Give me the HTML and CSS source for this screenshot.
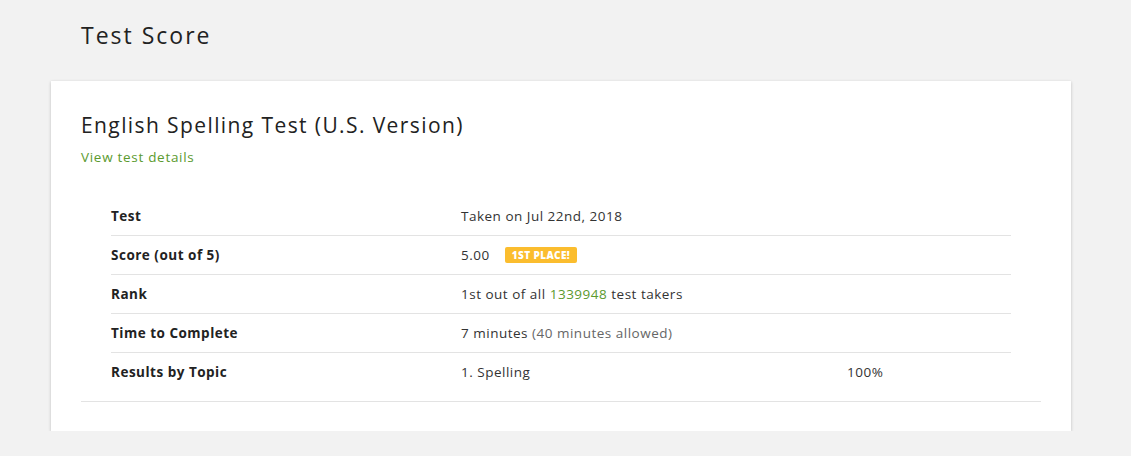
FILE: index.html
```html
<!DOCTYPE html>
<html>
<head>
<meta charset="utf-8">
<link rel="stylesheet" href="styles.css">
</head>
<body>
<div class="page">
  <h1 class="page-title">Test Score</h1>
  <div class="card">
    <h2 class="test-title">English Spelling Test (U.S. Version)</h2>
    <a class="details-link" href="#">View test details</a>
    <div class="table">
      <div class="row">
        <div class="label">Test</div>
        <div class="value">Taken on Jul 22nd, 2018</div>
        <div class="extra"></div>
      </div>
      <div class="row">
        <div class="label">Score (out of 5)</div>
        <div class="value">5.00<span class="badge">1st place!</span></div>
        <div class="extra"></div>
      </div>
      <div class="row">
        <div class="label">Rank</div>
        <div class="value">1st out of all <span class="green">1339948</span> test takers</div>
        <div class="extra"></div>
      </div>
      <div class="row">
        <div class="label">Time to Complete</div>
        <div class="value">7 minutes <span class="muted">(40 minutes allowed)</span></div>
        <div class="extra"></div>
      </div>
      <div class="row last">
        <div class="label">Results by Topic</div>
        <div class="value">1. Spelling</div>
        <div class="extra">100%</div>
      </div>
    </div>
    <div class="rule"></div>
  </div>
</div>
</body>
</html>
```
FILE: styles.css
```css
html, body {
  margin: 0;
  padding: 0;
  background: #f2f2f2;
}
body {
  font-family: "Open Sans", Lato, sans-serif;
  color: #222;
}
.page {
  padding: 0 60px 0 51px;
  width: 1020px;
}
.page-title {
  margin: 0;
  padding: 19px 0 0 30px;
  height: 81px;
  box-sizing: border-box;
  font-size: 23px;
  font-weight: 400;
  letter-spacing: 2px;
  line-height: 32px;
  color: #222;
}
.card {
  background: #fff;
  box-shadow: 0 1px 3px rgba(0,0,0,0.22);
  padding: 30px 30px 29px 30px;
}
.test-title {
  margin: 0;
  font-size: 21px;
  font-weight: 400;
  letter-spacing: 1.4px;
  line-height: 28px;
  color: #222;
}
.details-link {
  display: block;
  margin-top: 9px;
  font-size: 13.5px;
  letter-spacing: 0.7px;
  line-height: 18px;
  color: #5b9a2e;
  text-decoration: none;
}
.table {
  margin: 31px 30px 0 30px;
}
.row {
  display: flex;
  align-items: center;
  height: 38px;
  border-bottom: 1px solid #e3e3e3;
  font-size: 13.5px;
  letter-spacing: 0.5px;
}
.row.last {
  border-bottom: none;
  height: 38px;
}
.label {
  width: 350px;
  font-weight: 700;
  letter-spacing: 0.5px;
  color: #222;
}
.value {
  width: 386px;
  color: #333;
  display: flex;
  align-items: center;
  white-space: pre;
}
.extra {
  color: #333;
}
.green { color: #5b9a2e; }
.muted { color: #666; }
.badge {
  display: inline-block;
  margin-left: 15px;
  background: #fbbd2e;
  color: #fff;
  font-size: 10px;
  font-weight: 800;
  letter-spacing: 0.4px;
  text-transform: uppercase;
  padding: 2px 7px;
  border-radius: 2px;
  line-height: 12px;
}
.rule {
  margin-top: 10px;
  border-top: 1px solid #e3e3e3;
}
```
